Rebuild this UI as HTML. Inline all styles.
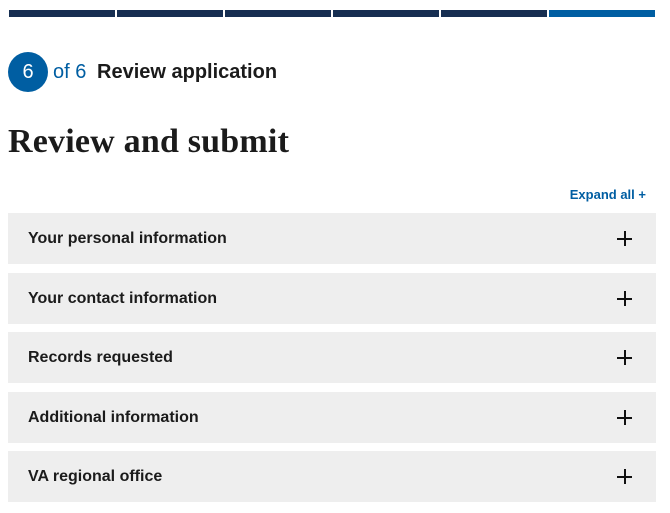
<!DOCTYPE html>
<html><head><style>
body{margin:0;background:#fff;font-family:"Liberation Sans",sans-serif;color:#1b1b1b;width:670px;height:513px;position:relative;overflow:hidden}
.bar{position:absolute;top:10px;height:7px;width:106px;background:#162e51}
.circ{position:absolute;left:8px;top:52px;width:40px;height:40px;border-radius:50%;background:#005ea2;color:#fff;font-size:20px;line-height:40px;text-align:center}
.of{position:absolute;left:53px;top:61px;font-size:20px;color:#005ea2}
.t{position:absolute;left:97px;top:61px;font-size:20px;font-weight:bold}
h1{position:absolute;left:8px;top:123px;margin:0;font-family:"Liberation Serif",serif;font-size:34px;font-weight:bold;letter-spacing:0.2px}
.exp{position:absolute;right:24px;top:187px;font-size:13px;font-weight:bold;color:#005ea2}
.row{position:absolute;left:8px;width:648px;height:51px;background:#eeeeee}
.row span{position:absolute;left:20px;top:17px;font-size:16px;font-weight:bold}
.row i{position:absolute;left:609px;top:18px;width:15px;height:15px}
.row i:before{content:"";position:absolute;left:0;top:6.5px;width:15px;height:2px;background:#111}
.row i:after{content:"";position:absolute;left:6.5px;top:0;width:2px;height:15px;background:#111}
</style></head><body>
<div class="bar" style="left:9px"></div><div class="bar" style="left:117px"></div><div class="bar" style="left:225px"></div><div class="bar" style="left:333px"></div><div class="bar" style="left:441px"></div><div class="bar" style="left:549px;background:#005ea2"></div>
<div class="circ">6</div><div class="of">of 6</div><div class="t">Review application</div>
<h1>Review and submit</h1>
<div class="exp">Expand all +</div>
<div class="row" style="top:213px"><span>Your personal information</span><i></i></div>
<div class="row" style="top:273px"><span>Your contact information</span><i></i></div>
<div class="row" style="top:332px"><span>Records requested</span><i></i></div>
<div class="row" style="top:392px"><span>Additional information</span><i></i></div>
<div class="row" style="top:451px"><span>VA regional office</span><i></i></div>
</body></html>
